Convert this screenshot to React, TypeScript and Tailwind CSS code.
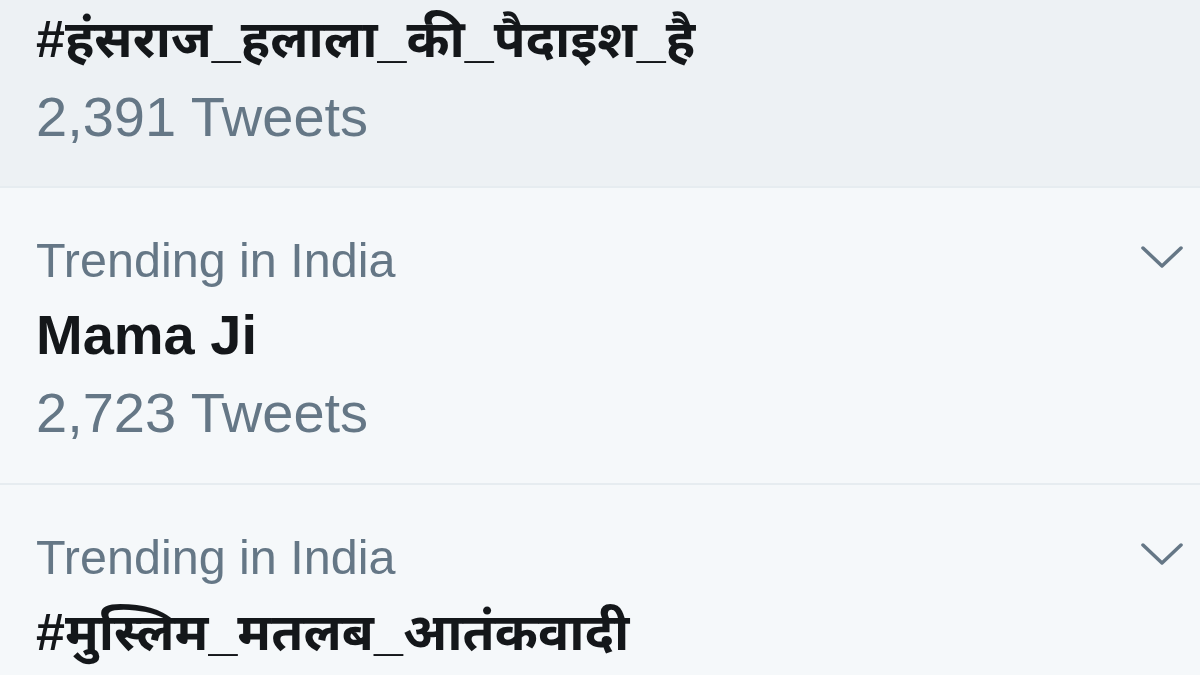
import React from "react";

const Chevron = () => (
  <svg width="42" height="24" viewBox="0 0 42 24" className="block">
    <polyline
      points="2,3 21,21 40,3"
      fill="none"
      stroke="#657786"
      strokeWidth="3.5"
      strokeLinecap="round"
      strokeLinejoin="round"
    />
  </svg>
);

export default function App() {
  return (
    <div
      className="w-[1200px] h-[675px] overflow-hidden bg-[#f5f8fa] text-[#14171a]"
      style={{ fontFamily: '"Liberation Sans", Arial, "Noto Sans", sans-serif' }}
    >
      {/* Row 1 (hovered) */}
      <div className="bg-[#edf1f4] border-b-2 border-[#e6ecf0] pl-[36px] pr-[18px] pb-[30px]">
        <div className="text-[52px] leading-[78px] font-bold whitespace-nowrap">
          #हंसराज_हलाला_की_पैदाइश_है
        </div>
        <div className="text-[56px] leading-[78px] text-[#657786]">2,391 Tweets</div>
      </div>

      {/* Row 2 */}
      <div className="border-b-2 border-[#e6ecf0] pl-[36px] pr-[17px] pt-[40px] pb-[31px] flex justify-between">
        <div>
          <div className="text-[48.5px] leading-[64px] text-[#657786]">Trending in India</div>
          <div className="mt-1 text-[56px] leading-[78px] font-bold">Mama Ji</div>
          <div className="text-[56px] leading-[78px] text-[#657786]">2,723 Tweets</div>
        </div>
        <div className="mt-[17px]">
          <Chevron />
        </div>
      </div>

      {/* Row 3 */}
      <div className="pl-[36px] pr-[17px] pt-[40px] flex justify-between">
        <div>
          <div className="text-[48.5px] leading-[64px] text-[#657786]">Trending in India</div>
          <div className="mt-1 text-[52px] leading-[78px] font-bold whitespace-nowrap">
            #मुस्लिम_मतलब_आतंकवादी
          </div>
        </div>
        <div className="mt-[17px]">
          <Chevron />
        </div>
      </div>
    </div>
  );
}
